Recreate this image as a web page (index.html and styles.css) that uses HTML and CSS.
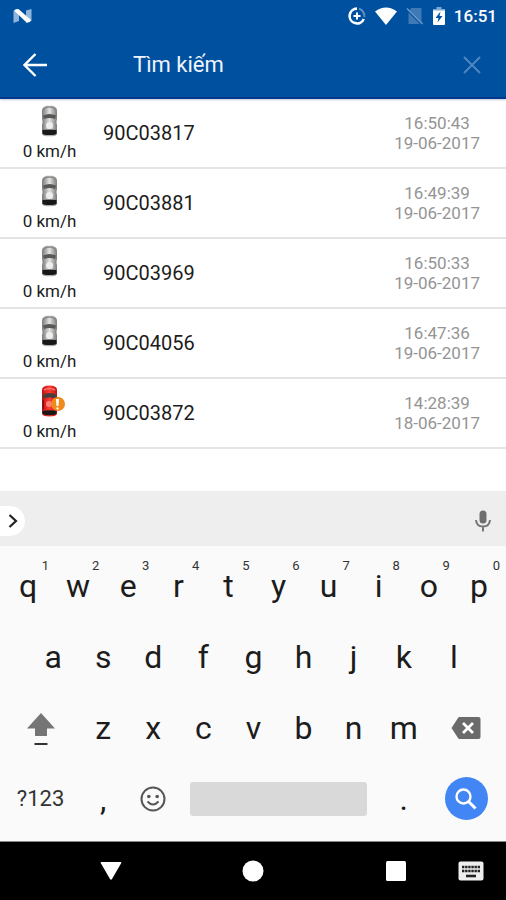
FILE: index.html
```html
<!DOCTYPE html>
<html lang="vi">
<head>
    <meta charset="UTF-8">
    <meta name="viewport" content="width=device-width, initial-scale=1.0">
    <title>Tìm kiếm</title>
    <link rel="stylesheet" href="styles.css">
</head>
<body>

    <!-- car icons -->
    <svg class="defs" aria-hidden="true">
        <defs>
            <linearGradient id="silver">
                <stop offset="0" stop-color="#7c7a78"/>
                <stop offset="0.5" stop-color="#e2e2e0"/>
                <stop offset="1" stop-color="#7c7a78"/>
            </linearGradient>
            <linearGradient id="red">
                <stop offset="0" stop-color="#c01010"/>
                <stop offset="0.5" stop-color="#ff3c34"/>
                <stop offset="1" stop-color="#c01010"/>
            </linearGradient>
        </defs>
        <symbol id="car" viewBox="0 0 32 32">
            <path d="M8 6Q8 0.500 15.500 0.500Q23 0.500 23 6V14L22 17L23 20V28Q23 31.500 15.500 31.500Q8 31.500 8 28V20L9 17L8 14Z" fill="url(#silver)"/>
            <path d="M8.500 7Q10 2 15.500 2Q21 2 22.500 7" fill="none" stroke="#8c8a88" stroke-width="1.500"/>
            <path d="M9 10.500Q15.500 7.500 22 10.500L21 14Q15.500 12 10 14Z" fill="#5a5856"/>
            <path d="M8.500 14V18L10 23V15.500ZM22.500 14V18L21 23V15.500Z" fill="#8e8c8a"/>
            <circle cx="15.500" cy="20.500" r="3.500" fill="#eee"/>
            <path d="M8.500 25Q15.500 24 22.500 25V29Q15.500 31.500 8.500 29Z" fill="#181818"/>
        </symbol>
        <symbol id="car-alert" viewBox="0 0 32 32">
            <path d="M8 5Q8 0.500 15.500 0.500Q23 0.500 23 5V28Q23 31.500 15.500 31.500Q8 31.500 8 28Z" fill="url(#red)"/>
            <path d="M10 5Q15.500 2 21 5" fill="none" stroke="#ff7a70" stroke-width="1.500"/>
            <path d="M8.500 10Q15.500 6 22.500 10L21.500 13.500Q15.500 11.500 9.500 13.500Z" fill="#44403e"/>
            <path d="M8.500 14L10 16V23L8.500 25Z" fill="#701414"/>
            <circle cx="15" cy="19" r="3" fill="#ff8078"/>
            <path d="M8.500 26Q15.500 24.500 22.500 26V29Q15.500 31.500 8.500 29Z" fill="#181818"/>
            <circle cx="24" cy="19" r="7" fill="#f08a1c"/>
            <path d="M22 14H25L24.500 21H22.500ZM22.500 22.500H24.500V24.500H22.500Z" fill="#fff"/>
        </symbol>
    </svg>

    <header class="header">
        <div class="status">
            <svg class="logo" width="20" height="16" viewBox="0 0 20 16">
                <path d="M0.500 3L6 1V13L0.500 15ZM13 2.500L18.500 1V13L13 15Z" fill="#8fb5dc"/>
                <path d="M1 2.500Q3 0 6 1.500L18 12Q17 15 13.500 14.500Z" fill="#fff"/>
            </svg>
            <svg class="data-saver" width="18" height="18" viewBox="0 0 18 18" fill="none" stroke="#fff">
                <path d="M11 1.800A7.400 7.400 0 0 1 16.300 10" stroke="#5c90c6" stroke-width="2"/>
                <path d="M9 1.600A7.400 7.400 0 1 0 15.800 12" stroke-width="2.600"/>
                <path d="M9 5.500V12.500M5.500 9H12.500" stroke-width="2"/>
            </svg>
            <svg width="22" height="18" viewBox="0 0 22 18">
                <path d="M0 4.500Q11 -3.500 22 4.500L11 18Z" fill="#fff"/>
            </svg>
            <svg width="18" height="18" viewBox="0 0 18 18">
                <path d="M2.500 5.500V17H14ZM5 1H15.500V15L4 3.500Z" fill="#3f79b6"/>
                <path d="M1 1.500L16.500 17" stroke="#6f9dcc" stroke-width="1.400"/>
            </svg>
            <svg width="12" height="18" viewBox="0 0 12 18">
                <path d="M3.500 0H8.500V2H12V5H0V2H3.500Z" fill="#7fa8d2"/>
                <path d="M0 3.500H12V17Q12 18 11 18H1Q0 18 0 17Z" fill="#fff"/>
                <path d="M7.500 4.500L2.500 11H5.500L4.500 15.500L9.500 9H6.500Z" fill="#0050a0"/>
            </svg>
            <span class="clock">16:51</span>
        </div>
        <form class="toolbar">
            <button class="icon-button" type="button" aria-label="Quay lại">
                <svg width="24" height="24" viewBox="0 0 24 24" fill="none" stroke="#fff" stroke-width="2.400">
                    <path d="M12.500 1L1.500 12L12.500 23M1.500 12H24"/>
                </svg>
            </button>
            <input class="search" type="text" placeholder="Tìm kiếm" aria-label="Tìm kiếm">
            <button class="icon-button" type="reset" aria-label="Xóa">
                <svg width="18" height="18" viewBox="0 0 18 18" stroke="#4d86bf" stroke-width="2">
                    <path d="M1 1L17 17M17 1L1 17"/>
                </svg>
            </button>
        </form>
    </header>

    <!-- results -->
    <ul class="results">
        <li class="vehicle">
            <div class="state"><svg class="car"><use href="#car"/></svg><span>0 km/h</span></div>
            <div class="plate">90C03817</div>
            <div class="time">16:50:43<br>19-06-2017</div>
        </li>
        <li class="vehicle">
            <div class="state"><svg class="car"><use href="#car"/></svg><span>0 km/h</span></div>
            <div class="plate">90C03881</div>
            <div class="time">16:49:39<br>19-06-2017</div>
        </li>
        <li class="vehicle">
            <div class="state"><svg class="car"><use href="#car"/></svg><span>0 km/h</span></div>
            <div class="plate">90C03969</div>
            <div class="time">16:50:33<br>19-06-2017</div>
        </li>
        <li class="vehicle">
            <div class="state"><svg class="car"><use href="#car"/></svg><span>0 km/h</span></div>
            <div class="plate">90C04056</div>
            <div class="time">16:47:36<br>19-06-2017</div>
        </li>
        <li class="vehicle">
            <div class="state"><svg class="car"><use href="#car-alert"/></svg><span>0 km/h</span></div>
            <div class="plate">90C03872</div>
            <div class="time">14:28:39<br>18-06-2017</div>
        </li>
    </ul>

    <!-- keyboard -->
    <div class="suggestions">
        <button class="expand" type="button" aria-label="Mở rộng">
            <svg width="10" height="14" viewBox="0 0 10 14" fill="none" stroke="#222" stroke-width="2.200">
                <path d="M1.500 1L8 7L1.500 13"/>
            </svg>
        </button>
        <button class="mic" type="button" aria-label="Giọng nói">
            <svg width="16" height="22" viewBox="0 0 16 22">
                <rect x="4.500" y="0.500" width="7" height="13" rx="3.500" fill="#6e6e6e"/>
                <path d="M1 10Q1.500 16.500 8 16.500Q14.500 16.500 15 10M8 16.500V21.500" fill="none" stroke="#777" stroke-width="2"/>
            </svg>
        </button>
    </div>
    <div class="keyboard">
        <div class="keys">
            <button class="key" type="button">q<sup>1</sup></button>
            <button class="key" type="button">w<sup>2</sup></button>
            <button class="key" type="button">e<sup>3</sup></button>
            <button class="key" type="button">r<sup>4</sup></button>
            <button class="key" type="button">t<sup>5</sup></button>
            <button class="key" type="button">y<sup>6</sup></button>
            <button class="key" type="button">u<sup>7</sup></button>
            <button class="key" type="button">i<sup>8</sup></button>
            <button class="key" type="button">o<sup>9</sup></button>
            <button class="key" type="button">p<sup>0</sup></button>
        </div>
        <div class="keys">
            <button class="key second-row" type="button">a</button>
            <button class="key" type="button">s</button>
            <button class="key" type="button">d</button>
            <button class="key" type="button">f</button>
            <button class="key" type="button">g</button>
            <button class="key" type="button">h</button>
            <button class="key" type="button">j</button>
            <button class="key" type="button">k</button>
            <button class="key" type="button">l</button>
        </div>
        <div class="keys">
            <button class="key wide" type="button" aria-label="Shift">
                <svg width="28" height="38" viewBox="0 0 28 38">
                    <path d="M14 4L28 19.500H20V27H8V19.500H0Z" fill="#757575"/>
                    <path d="M7.500 35H20.500" stroke="#333" stroke-width="2"/>
                </svg>
            </button>
            <button class="key" type="button">z</button>
            <button class="key" type="button">x</button>
            <button class="key" type="button">c</button>
            <button class="key" type="button">v</button>
            <button class="key" type="button">b</button>
            <button class="key" type="button">n</button>
            <button class="key" type="button">m</button>
            <button class="key wide" type="button" aria-label="Xóa lùi">
                <svg width="30" height="22" viewBox="0 0 30 22">
                    <path d="M8.500 0H27.500Q29.500 0 29.500 2V20Q29.500 22 27.500 22H8.500Q7.500 22 7 21L0.500 11L7 1Q7.500 0 8.500 0Z" fill="#6b6b6b"/>
                    <path d="M12 6L22 16M22 6L12 16" stroke="#fff" stroke-width="2.800"/>
                </svg>
            </button>
        </div>
        <div class="keys">
            <button class="key wide symbols" type="button">?123</button>
            <button class="key" type="button">,</button>
            <button class="key" type="button" aria-label="Emoji">
                <svg width="26" height="26" viewBox="0 0 26 26" fill="none" stroke="#555" stroke-width="2">
                    <circle cx="13" cy="13" r="11.500"/>
                    <circle cx="8.800" cy="10.500" r="1.800" fill="#555" stroke="none"/>
                    <circle cx="17.200" cy="10.500" r="1.800" fill="#555" stroke="none"/>
                    <path d="M7.500 15.500Q13 21.500 18.500 15.500"/>
                </svg>
            </button>
            <button class="key space" type="button" aria-label="Dấu cách"><span class="space-bar"></span></button>
            <button class="key" type="button">.</button>
            <button class="key wide" type="button" aria-label="Tìm">
                <span class="go">
                    <svg width="22" height="22" viewBox="0 0 22 22" fill="none" stroke="#fff">
                        <circle cx="8.500" cy="8.500" r="7" stroke-width="2.400"/>
                        <path d="M13.500 13.500L20.500 20.500" stroke-width="3"/>
                    </svg>
                </span>
            </button>
        </div>
    </div>

    <nav class="navbar">
        <button class="nav-button back" type="button" aria-label="Back">
            <svg width="22" height="18" viewBox="0 0 22 18"><path d="M1.500 0H20.500Q22 0 21 1.500L12 17Q11 18.500 10 17L1 1.500Q0 0 1.500 0Z" fill="#fff"/></svg>
        </button>
        <button class="nav-button home" type="button" aria-label="Home">
            <svg width="22" height="22" viewBox="0 0 22 22"><circle cx="11" cy="11" r="10.500" fill="#fff"/></svg>
        </button>
        <button class="nav-button recent" type="button" aria-label="Recent">
            <svg width="20" height="20" viewBox="0 0 20 20"><rect width="20" height="20" rx="1.500" fill="#fff"/></svg>
        </button>
        <button class="nav-button switcher" type="button" aria-label="Keyboard">
            <svg width="26" height="20" viewBox="0 0 26 20">
                <rect x="0.500" y="0.500" width="25" height="19" rx="2" fill="#eee"/>
                <path d="M4 6H22M4 10H22" stroke="#222" stroke-width="2.400" stroke-dasharray="2.400 0.720"/>
                <path d="M8 15H18" stroke="#222" stroke-width="2.600"/>
            </svg>
        </button>
    </nav>

</body>
</html>
```

FILE: styles.css
```css
* {
    box-sizing: border-box;
}
body {
    margin: 0;
    min-height: 100vh;
    display: flex;
    flex-direction: column;
    font-family: Roboto, "Noto Sans", sans-serif;
    background-color: #fff;
    color: #1c1c1c;
}
button {
    padding: 0;
    border: none;
    background: none;
    font-family: inherit;
    color: inherit;
    cursor: pointer;
}
svg {
    display: block;
}
.defs {
    position: absolute;
    width: 0;
    height: 0;
}

/* header */
.header {
    background-color: #0050a0;
    border-bottom: 2px solid #00388c;
    box-shadow: 0 1px 2px #c4c8dc;
    color: #fff;
}
.status {
    display: flex;
    align-items: center;
    gap: 9px;
    height: 32px;
    padding: 0 9px 0 13px;
}
.logo {
    margin-right: auto;
}
.clock {
    font-size: 17px;
    font-weight: 500;
}
.toolbar {
    display: flex;
    align-items: center;
    height: 65px;
}
.icon-button {
    display: flex;
    justify-content: center;
    width: 69px;
}
.search {
    flex: 1;
    min-width: 0;
    margin-left: 64px;
    padding: 0;
    border: none;
    outline: none;
    background: none;
    font-family: inherit;
    font-size: 22px;
    color: #fff;
}
.search::placeholder {
    color: #f0f5fb;
    opacity: 1;
}

/* results */
.results {
    flex: 1;
    margin: 0;
    padding: 0;
    list-style: none;
}
.vehicle {
    display: flex;
    align-items: center;
    height: 70px;
    padding-right: 26px;
    border-bottom: 2px solid #e4e4e4;
}
.state {
    display: flex;
    flex-direction: column;
    align-items: center;
    gap: 2px;
    width: 99px;
    padding-top: 2px;
    font-size: 17px;
    line-height: 24px;
}
.car {
    width: 32px;
    height: 32px;
}
.plate {
    flex: 1;
    padding-left: 4px;
    font-size: 20px;
}
.time {
    font-size: 17px;
    line-height: 20px;
    text-align: center;
    color: #949494;
}

/* keyboard */
.suggestions {
    display: flex;
    align-items: center;
    justify-content: space-between;
    height: 55px;
    padding: 4px 15px 0 0;
    background-color: #eee;
}
.expand {
    display: flex;
    align-items: center;
    justify-content: center;
    width: 25px;
    height: 30px;
    border-radius: 0 15px 15px 0;
    background-color: #fff;
}
.keyboard {
    padding: 4px 2px 7px 3px;
    border-bottom: 1px solid #888;
    background-color: #fafafa;
}
.keys {
    display: grid;
    grid-template-columns: repeat(20, 1fr);
    height: 71px;
}
.key {
    position: relative;
    grid-column: span 2;
    display: flex;
    align-items: center;
    justify-content: center;
    font-size: 32px;
}
.key sup {
    position: absolute;
    top: 8px;
    right: 4px;
    font-size: 13px;
    line-height: 16px;
    color: #333;
}
.second-row {
    grid-column: 2 / span 2;
}
.wide {
    grid-column: span 3;
}
.symbols {
    font-size: 22px;
    color: #333;
}
.space {
    grid-column: span 8;
}
.space-bar {
    flex: 1;
    height: 34px;
    margin: 0 12px;
    border-radius: 3px;
    background-color: #d9d9d9;
}
.go {
    display: flex;
    align-items: center;
    justify-content: center;
    width: 43px;
    height: 43px;
    border-radius: 50%;
    background-color: #4285f4;
}

/* navigation bar */
.navbar {
    display: grid;
    grid-template-columns: 71fr 80fr 62fr 80fr 63fr 80fr 70fr;
    height: 58px;
    background-color: #000;
}
.nav-button {
    display: flex;
    align-items: center;
    justify-content: center;
}
.back {
    grid-column: 2;
}
.home {
    grid-column: 4;
}
.recent {
    grid-column: 6;
}
.switcher {
    grid-column: 7;
}
```
